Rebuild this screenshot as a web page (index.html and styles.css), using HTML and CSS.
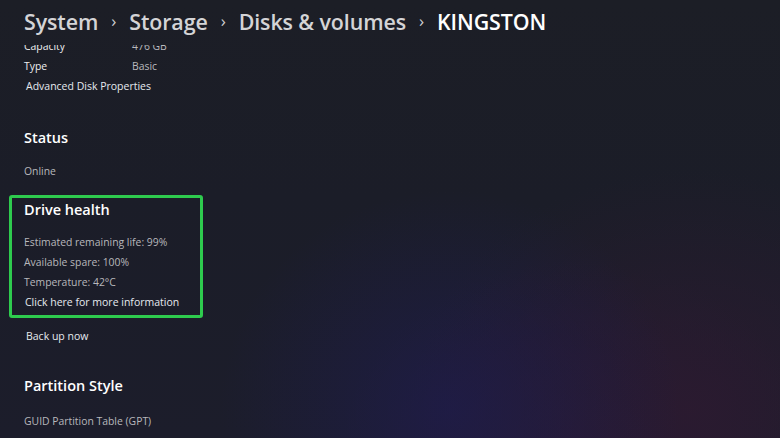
FILE: index.html
```html
<!DOCTYPE html>
<html lang="en">
<head>
<meta charset="utf-8">
<title>Disks &amp; volumes - KINGSTON</title>
<link rel="stylesheet" href="styles.css">
</head>
<body>
<div class="page">
  <header class="crumbs">
    <span class="crumb">System</span><span class="sep">›</span>
    <span class="crumb">Storage</span><span class="sep">›</span>
    <span class="crumb">Disks &amp; volumes</span><span class="sep">›</span>
    <span class="crumb current">KINGSTON</span>
  </header>
  <main class="viewport">
    <div class="content">
      <div class="props">
        <div class="prop"><span class="prop-label">Capacity</span><span class="prop-value">476 GB</span></div>
        <div class="prop"><span class="prop-label">Type</span><span class="prop-value">Basic</span></div>
      </div>
      <a class="link adv">Advanced Disk Properties</a>

      <section class="section status">
        <h2 class="heading">Status</h2>
        <p class="value">Online</p>
      </section>

      <section class="health">
        <h2 class="heading">Drive health</h2>
        <ul class="health-list">
          <li class="value">Estimated remaining life: 99%</li>
          <li class="value">Available spare: 100%</li>
          <li class="value">Temperature: 42°C</li>
        </ul>
        <a class="link">Click here for more information</a>
      </section>

      <a class="link backup">Back up now</a>

      <section class="section partition">
        <h2 class="heading">Partition Style</h2>
        <p class="value">GUID Partition Table (GPT)</p>
      </section>
    </div>
  </main>
</div>
</body>
</html>
```
FILE: styles.css
```css
html, body {
  margin: 0;
  padding: 0;
  height: 100%;
}
body {
  font-family: "Open Sans", "Noto Sans", sans-serif;
  color: #e8e8ea;
  background: #1c1e27;
  overflow: hidden;
}
.page {
  width: 780px;
  height: 438px;
  display: flex;
  flex-direction: column;
  background:
    radial-gradient(ellipse 230px 220px at 450px 410px, rgba(30, 28, 78, 0.7), rgba(30, 28, 78, 0) 100%),
    radial-gradient(ellipse 280px 240px at 690px 410px, rgba(44, 26, 48, 0.85), rgba(44, 26, 48, 0) 100%),
    radial-gradient(ellipse 240px 200px at 580px 460px, rgba(42, 24, 54, 0.7), rgba(42, 24, 54, 0) 100%),
    linear-gradient(180deg, #1c1e26 0%, #1b1d28 45%, #1c1d2b 100%);
}
.crumbs {
  height: 45px;
  flex: none;
  display: flex;
  align-items: center;
  padding: 0 0 2px 24px;
  box-sizing: border-box;
  font-family: "Open Sans", sans-serif;
  font-weight: 600;
  font-size: 21.4px;
  color: #d4d4d6;
  letter-spacing: -0.1px;
}
.crumb { white-space: nowrap; }
.crumb.current { color: #ffffff; }
.sep {
  font-size: 17px;
  font-weight: 400;
  margin: 0 13px;
  color: #cfcfd2;
  position: relative;
  top: -1px;
}
.viewport {
  flex: 1;
  overflow: hidden;
}
.content {
  margin-top: -7px;
  padding-left: 24px;
  font-size: 10.4px;
}
.props {
  display: flex;
  flex-direction: column;
  gap: 4px;
}
.prop {
  display: flex;
  height: 16px;
  align-items: center;
}
.prop-label {
  width: 108px;
  color: #eeeeef;
}
.prop-value {
  color: #b9b9bd;
}
.link {
  display: block;
  color: #e6eaef;
  font-size: 10.5px;
  line-height: 16px;
}
.adv {
  margin: 4px 0 0 2px;
}
.heading {
  margin: 0;
  font-size: 14.5px;
  font-weight: 600;
  color: #ffffff;
  line-height: 20px;
}
.value {
  margin: 0;
  color: #b8b8bc;
  font-size: 10.4px;
  line-height: 16px;
}
.status {
  margin-top: 34px;
}
.status .value {
  margin-top: 15px;
}
.health {
  margin: 16px 0 0 -15px;
  width: 176px;
  border: 3px solid #2ecb4e;
  border-radius: 3px;
  padding: 2px 0 5px 12px;
}
.health-list {
  list-style: none;
  margin: 14px 0 0;
  padding: 0;
  display: flex;
  flex-direction: column;
  gap: 4px;
}
.health .link {
  margin: 4px 0 0 1px;
}
.backup {
  margin: 10px 0 0 2px;
}
.partition {
  margin-top: 32px;
}
.partition .value {
  margin-top: 17px;
}
```
